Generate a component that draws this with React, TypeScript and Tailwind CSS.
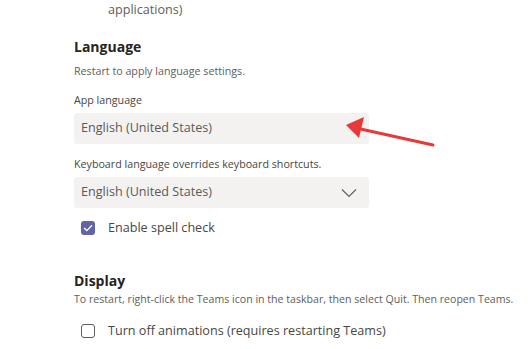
import React from "react";

const Chevron = () => (
  <svg width="16" height="10" viewBox="0 0 16 10" fill="none">
    <path d="M1 1.5 L8 8.5 L15 1.5" stroke="#616161" strokeWidth="1.2" />
  </svg>
);

const Dropdown = ({ chevron }: { chevron?: boolean }) => (
  <div className="w-[295px] h-[31px] bg-[#f3f2f1] rounded-[3px] flex items-center justify-between pl-[7px] pr-[12px]">
    <span className="text-[12.6px] text-[#5b5957]">English (United States)</span>
    {chevron && <Chevron />}
  </div>
);

const Checkbox = ({ checked, label }: { checked?: boolean; label: string }) => (
  <div className="flex items-center pl-[7px] gap-[13px]">
    {checked ? (
      <div className="w-[14px] h-[14px] rounded-[3px] bg-[#6264a7] flex items-center justify-center">
        <svg width="10" height="8" viewBox="0 0 10 8" fill="none">
          <path d="M1 4 L3.8 6.6 L9 1.2" stroke="#ffffff" strokeWidth="1.3" />
        </svg>
      </div>
    ) : (
      <div className="w-[14px] h-[14px] rounded-[3px] border border-[#605e5c] bg-white" />
    )}
    <span className="text-[12.6px] text-[#484644]">{label}</span>
  </div>
);

export default function App() {
  return (
    <div
      className="relative w-[531px] h-[349px] bg-white overflow-hidden"
      style={{ fontFamily: '"Open Sans", "Noto Sans", sans-serif' }}
    >
      <div className="pl-[74px] flex flex-col">
        <div className="pl-[34px] mt-[1px] text-[12.6px] text-[#605e5c] leading-[18px]">
          applications)
        </div>

        <h2 className="mt-[19px] text-[14px] font-bold text-[#252423] leading-[18px]">Language</h2>
        <p className="mt-[8px] text-[10.7px] text-[#605e5c] leading-[14px]">
          Restart to apply language settings.
        </p>
        <p className="mt-[15px] text-[10.7px] text-[#484644] leading-[14px]">App language</p>
        <div className="mt-[6px]">
          <Dropdown />
        </div>
        <p className="mt-[13px] text-[10.7px] text-[#484644] leading-[14px]">
          Keyboard language overrides keyboard shortcuts.
        </p>
        <div className="mt-[6px]">
          <Dropdown chevron />
        </div>
        <div className="mt-[11px]">
          <Checkbox checked label="Enable spell check" />
        </div>

        <h2 className="mt-[34px] text-[14px] font-bold text-[#252423] leading-[18px]">Display</h2>
        <p className="mt-[2px] text-[10.6px] text-[#605e5c] leading-[14px] whitespace-nowrap">
          To restart, right-click the Teams icon in the taskbar, then select Quit. Then reopen Teams.
        </p>
        <div className="mt-[16px]">
          <Checkbox label="Turn off animations (requires restarting Teams)" />
        </div>
      </div>

      <svg className="absolute left-0 top-0" width="531" height="349" viewBox="0 0 531 349">
        <path d="M433 145 L356 128" stroke="#e8393a" strokeWidth="3" strokeLinecap="round" />
        <path d="M346 125 L364 117 L359 138 Z" fill="#e8393a" />
      </svg>
    </div>
  );
}
